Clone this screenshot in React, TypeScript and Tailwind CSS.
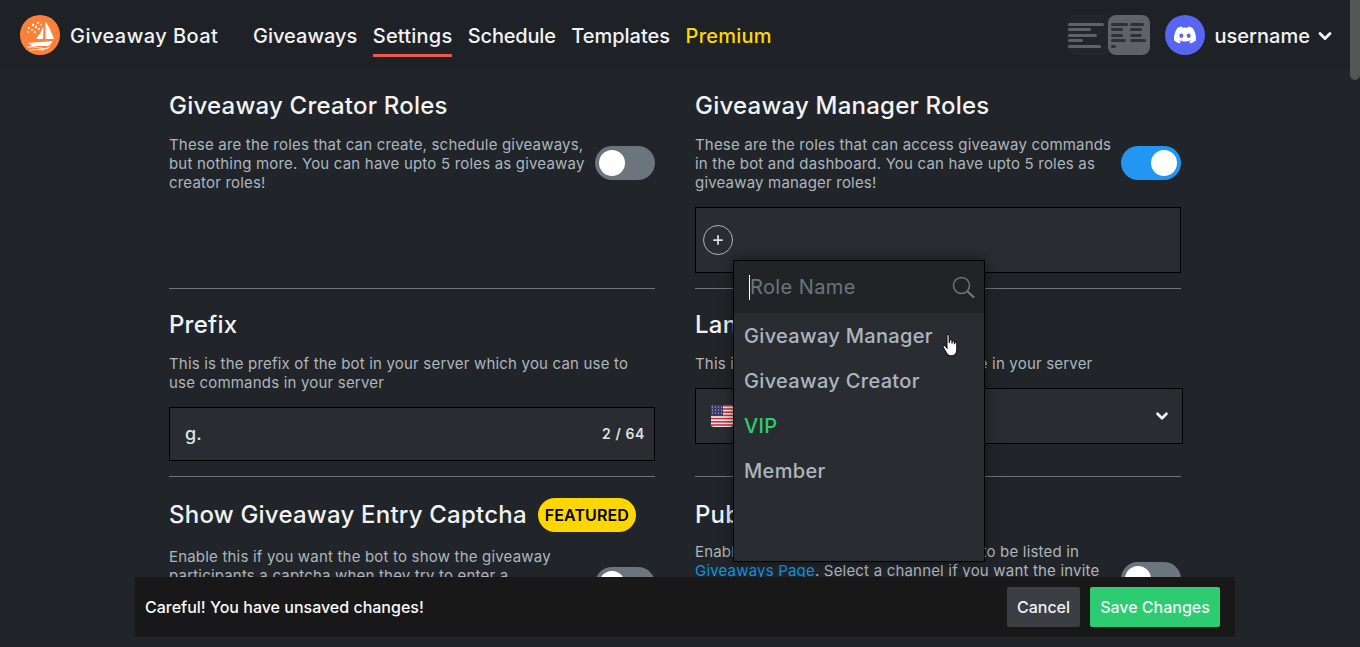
import { FaDiscord } from 'react-icons/fa';
import { FiChevronDown, FiPlus } from 'react-icons/fi';

const NAV_LINKS = [
  { label: 'Giveaways', style: 'text-[#f1f3f5] border-transparent' },
  { label: 'Settings', style: 'text-[#f1f3f5] border-[#f0564a] tracking-[0.2px]' },
  { label: 'Schedule', style: 'text-[#f1f3f5] border-transparent tracking-[-0.2px]' },
  { label: 'Templates', style: 'text-[#f1f3f5] border-transparent' },
  { label: 'Premium', style: 'text-[#ffd700] border-transparent tracking-[0.25px]' },
];
const ROLES = [
  { name: 'Giveaway Manager', color: 'text-[#adb5bd]' },
  { name: 'Giveaway Creator', color: 'text-[#adb5bd]' },
  { name: 'VIP', color: 'text-[#2ecc71]' },
  { name: 'Member', color: 'text-[#adb5bd]' },
];
const TITLE = 'text-2xl font-medium tracking-[0.22px] text-[#f1f3f5]';
const DESC = 'text-[15px] leading-[19px] tracking-[0.19px] text-[#adb5bd]';

function Logo() {
  return (
    <svg viewBox="0 0 40 40" className="w-10 h-10 shrink-0">
      <circle cx="20" cy="20" r="20" fill="#ff8038" />
      <path d="M25.5 6 Q31 15 34 24 L25.5 24 Z M23.5 11 L23 24 L16 24 Q21 18 23.5 11 Z" fill="#fff" />
      <path d="M8 28 L33 26 L29 31 L12 31 Z" fill="#fff" />
      <path d="M7 32 Q14 31 20 33 T30 32 M10 35 Q17 34 24 35" stroke="#fff" strokeWidth="1" fill="none" />
      <g fill="#fff">
        <circle cx="9" cy="13" r="1" /><circle cx="13" cy="10" r="1.2" /><circle cx="18" cy="8" r="1" />
        <circle cx="12" cy="15" r="1" /><circle cx="16" cy="12" r="1.2" /><circle cx="8" cy="17" r="0.8" />
        <circle cx="21" cy="10" r="0.8" /><circle cx="15" cy="17" r="1" /><circle cx="19" cy="14" r="1" />
      </g>
    </svg>
  );
}

function LayoutSwitch() {
  const bar = 'h-[3px] bg-[#2e3136] rounded-full';
  return (
    <div className="flex w-[84px] h-10 mr-[15px]">
      <div className="w-[42px] bg-[#22252a] rounded-l-lg flex flex-col justify-center gap-[2.5px] pl-[2px]">
        <div className="h-[3px] w-9 bg-[#5f6267] rounded-full" />
        <div className="h-[3px] w-[23px] bg-[#5f6267] rounded-full" />
        <div className="h-[3px] w-[29px] bg-[#5f6267] rounded-full" />
        <div className="h-[3px] w-[15px] bg-[#5f6267] rounded-full" />
        <div className="h-[3px] w-[33px] bg-[#5f6267] rounded-full" />
      </div>
      <div className="w-[42px] bg-[#5f6267] rounded-lg flex flex-col justify-center gap-[2.5px] pl-[3px]">
        <div className="flex gap-[2px]"><div className={`${bar} w-[17px]`} /><div className={`${bar} w-[14px]`} /></div>
        <div className="flex gap-[7px]"><div className={`${bar} w-[12px]`} /><div className={`${bar} w-[12px]`} /></div>
        <div className="flex gap-[7px]"><div className={`${bar} w-[12px]`} /><div className={`${bar} w-[12px]`} /></div>
        <div className="flex gap-[4px]"><div className={`${bar} w-[15px]`} /><div className={`${bar} w-[16px]`} /></div>
        <div className={`${bar} w-[5px]`} />
      </div>
    </div>
  );
}

function Toggle({ on }: { on?: boolean }) {
  return (
    <div className={`w-[60px] h-[34px] mb-[2px] rounded-full flex items-center px-1 shrink-0 ${on ? 'bg-[#2196f3] justify-end' : 'bg-[#6c757d]'}`}>
      <div className="w-[26px] h-[26px] rounded-full bg-white" />
    </div>
  );
}

function Flag() {
  return (
    <svg viewBox="0 0 22 22" className="w-[22px] h-[22px] rounded-[3px]">
      <rect width="22" height="22" fill="#f3f3f3" />
      {[0, 1, 2, 3, 4, 5, 6].map(i => <rect key={i} y={i * 3.2} width="22" height="1.6" fill="#c8313e" />)}
      <rect width="12" height="11" fill="#3c3b6e" />
      {[2, 5, 8, 11].map(x => [2, 5, 8].map(y => <circle key={`${x}-${y}`} cx={x - 0.5} cy={y} r="0.6" fill="#d8d8e8" />))}
    </svg>
  );
}

function HandCursor() {
  return (
    <svg viewBox="0 0 14.5 21.5" className="w-4 h-6">
      <path
        d="M4.5 2 C4.5 .8 6.5 .8 6.5 2 L6.5 9 L7 6.5 C7 5.5 9 5.5 9 6.7 L9 9.5 L9.3 7.5 C9.5 6.5 11.2 6.7 11.2 7.8 L11.2 10 L11.6 8.6 C11.9 7.7 13.4 8 13.4 9 L13.4 15 C13.4 18 12 20 9.5 20.5 L7 20.5 C5 20 4 18.5 2.8 16 L1 12.5 C.6 11.4 2 10.5 2.9 11.5 L4.5 13.5 Z"
        fill="#fff" stroke="#111" strokeWidth="1"
      />
    </svg>
  );
}

export default function App() {
  return (
    <div className="relative h-screen overflow-hidden bg-[#212529] font-['Inter','Noto_Sans',sans-serif]">
      <header className="h-[70px] bg-[#1e2125] flex items-center pl-5 pr-[25px]">
        <Logo />
        <span className="ml-[10px] pt-[2px] text-xl font-medium tracking-[0.45px] text-[#f1f3f5] w-[183px] whitespace-nowrap">Giveaway Boat</span>
        <nav className="flex gap-[15.5px] text-xl font-medium h-[57px] self-start">
          {NAV_LINKS.map(link => (
            <a key={link.label} className={`flex items-center whitespace-nowrap border-b-[3px] pt-[17px] ${link.style}`}>
              {link.label}
            </a>
          ))}
        </nav>
        <div className="ml-auto flex items-center">
          <LayoutSwitch />
          <div className="w-10 h-10 rounded-full bg-[#5865f2] flex items-center justify-center mr-[10px]">
            <FaDiscord className="w-6 h-6 text-white" />
          </div>
          <span className="pt-[2px] text-xl font-medium text-[#f1f3f5]">username</span>
          <FiChevronDown className="w-5 h-5 ml-[5px] mt-[2px] text-[#f1f3f5]" strokeWidth={3.5} />
        </div>
      </header>

      <main className="w-[1012px] ml-[169px] grid grid-cols-2 gap-x-10">
        <section className="h-[219px] border-b border-[#6c757d] pt-[21px]">
          <h2 className={`${TITLE} leading-[30px]`}>Giveaway Creator Roles</h2>
          <div className="flex items-center justify-between mt-[14px]">
            <p className={`${DESC} w-[420px]`}>These are the roles that can create, schedule giveaways, but nothing more. You can have upto 5 roles as giveaway creator roles!</p>
            <Toggle />
          </div>
        </section>
        <section className="h-[219px] border-b border-[#6c757d] pt-[21px]">
          <h2 className={`${TITLE} leading-[30px]`}>Giveaway Manager Roles</h2>
          <div className="flex items-center justify-between mt-[14px]">
            <p className={`${DESC} w-[420px]`}>These are the roles that can access giveaway commands in the bot and dashboard. You can have upto 5 roles as giveaway manager roles!</p>
            <Toggle on />
          </div>
          <div className="mt-[15px] h-[66px] bg-[#292d31] border border-black flex items-center pl-[7px]">
            <div className="w-[30px] h-[30px] rounded-full border border-[#adb5bd] flex items-center justify-center">
              <FiPlus className="w-[14px] h-[14px] text-[#dee2e6]" strokeWidth={3} />
            </div>
          </div>
        </section>

        <section className="h-[188px] border-b border-[#6c757d] pt-[21px]">
          <h2 className={`${TITLE} leading-[30px]`}>Prefix</h2>
          <p className={`${DESC} mt-[14px]`}>This is the prefix of the bot in your server which you can use to use commands in your server</p>
          <div className="mt-[15px] h-[54px] bg-[#292d31] border border-black flex items-center justify-between pl-[15px] pr-[9px]">
            <span className="text-lg font-medium text-[#dee2e6]">g.</span>
            <span className="text-sm font-semibold tracking-[0.6px] text-[#dee2e6]">2 / 64</span>
          </div>
        </section>
        <section className="h-[188px] border-b border-[#6c757d] pt-[21px]">
          <h2 className={`${TITLE} leading-[30px]`}>Language</h2>
          <p className={`${DESC} mt-[14px]`}>This is the language that the bot will use in your server</p>
          <div className="mt-[15px] w-[488px] h-[56px] bg-[#292d31] border border-black flex items-center justify-between pl-[15px] pr-[11px]">
            <div className="flex items-center gap-2 text-[#dee2e6]"><Flag /><span>English</span></div>
            <FiChevronDown className="w-[18px] h-[18px] text-[#f1f3f5]" strokeWidth={3.5} />
          </div>
        </section>

        <section className="pt-[21px]">
          <div className="flex items-center gap-[11px]">
            <h2 className={`${TITLE} leading-[34px]`}>Show Giveaway Entry Captcha</h2>
            <span className="h-[34px] px-[7px] rounded-full bg-[#ffd700] text-black font-semibold text-base tracking-[0.1px] flex items-center">FEATURED</span>
          </div>
          <div className="flex items-center justify-between mt-[15px]">
            <p className={`${DESC} w-[395px]`}>Enable this if you want the bot to show the giveaway participants a captcha when they try to enter a giveaway so that automated accounts and bots cannot join any giveaway in your server</p>
            <Toggle />
          </div>
        </section>
        <section className="pt-[21px]">
          <h2 className={`${TITLE} leading-[34px]`}>Public Giveaways</h2>
          <div className="flex items-center justify-between mt-[10px]">
            <p className={`${DESC} w-[420px]`}>Enable this if you want your giveaways to be listed in <a className="text-[#0d95e8]">Giveaways Page</a>. Select a channel if you want the invite link to be for a specific channel of your server instead of the default one</p>
            <Toggle />
          </div>
        </section>
      </main>

      <div className="absolute left-[733px] top-[260px] w-[252px] h-[302px] bg-[#292d31] border border-black shadow-[0_0_12px_rgba(0,0,0,0.5)]">
        <div className="h-[52px] bg-[#212427] flex items-center justify-between pl-[15px] pr-[9px]">
          <div className="flex items-center">
            <div className="w-px h-[25px] bg-white" />
            <span className="text-xl tracking-[0.4px] text-[#6c757d]">Role Name</span>
          </div>
          <svg viewBox="0 0 24 24" className="w-6 h-6 text-[#6c757d]" fill="none" stroke="currentColor" strokeWidth="1.5" strokeLinecap="round">
            <circle cx="10.5" cy="10.5" r="8" />
            <path d="M16.5 16.5 L22.5 22" strokeWidth="2.2" />
          </svg>
        </div>
        <ul>
          {ROLES.map(role => (
            <li key={role.name} className={`h-[45px] flex items-center pl-[10px] text-xl font-medium tracking-[0.32px] whitespace-nowrap ${role.color}`}>{role.name}</li>
          ))}
        </ul>
      </div>

      <div className="absolute left-[942px] top-[333px]"><HandCursor /></div>

      <div className="absolute left-[135px] top-[577px] w-[1100px] h-[60px] bg-[#181818] flex items-center justify-between pl-[10px] pr-[15px]">
        <span className="text-base font-medium text-[#f8f9fa]">Careful! You have unsaved changes!</span>
        <div className="flex gap-[10px]">
          <button className="h-10 w-[73px] rounded-[2px] bg-[#3b3e42] text-[#f1f3f5] text-base font-medium">Cancel</button>
          <button className="h-10 w-[130px] rounded-[2px] bg-[#2ecc71] text-[#f1f3f5] text-base font-medium">Save Changes</button>
        </div>
      </div>

      <div className="absolute right-0 top-0 w-[10px] h-20 bg-[#555] rounded-b-full" />
    </div>
  );
}
